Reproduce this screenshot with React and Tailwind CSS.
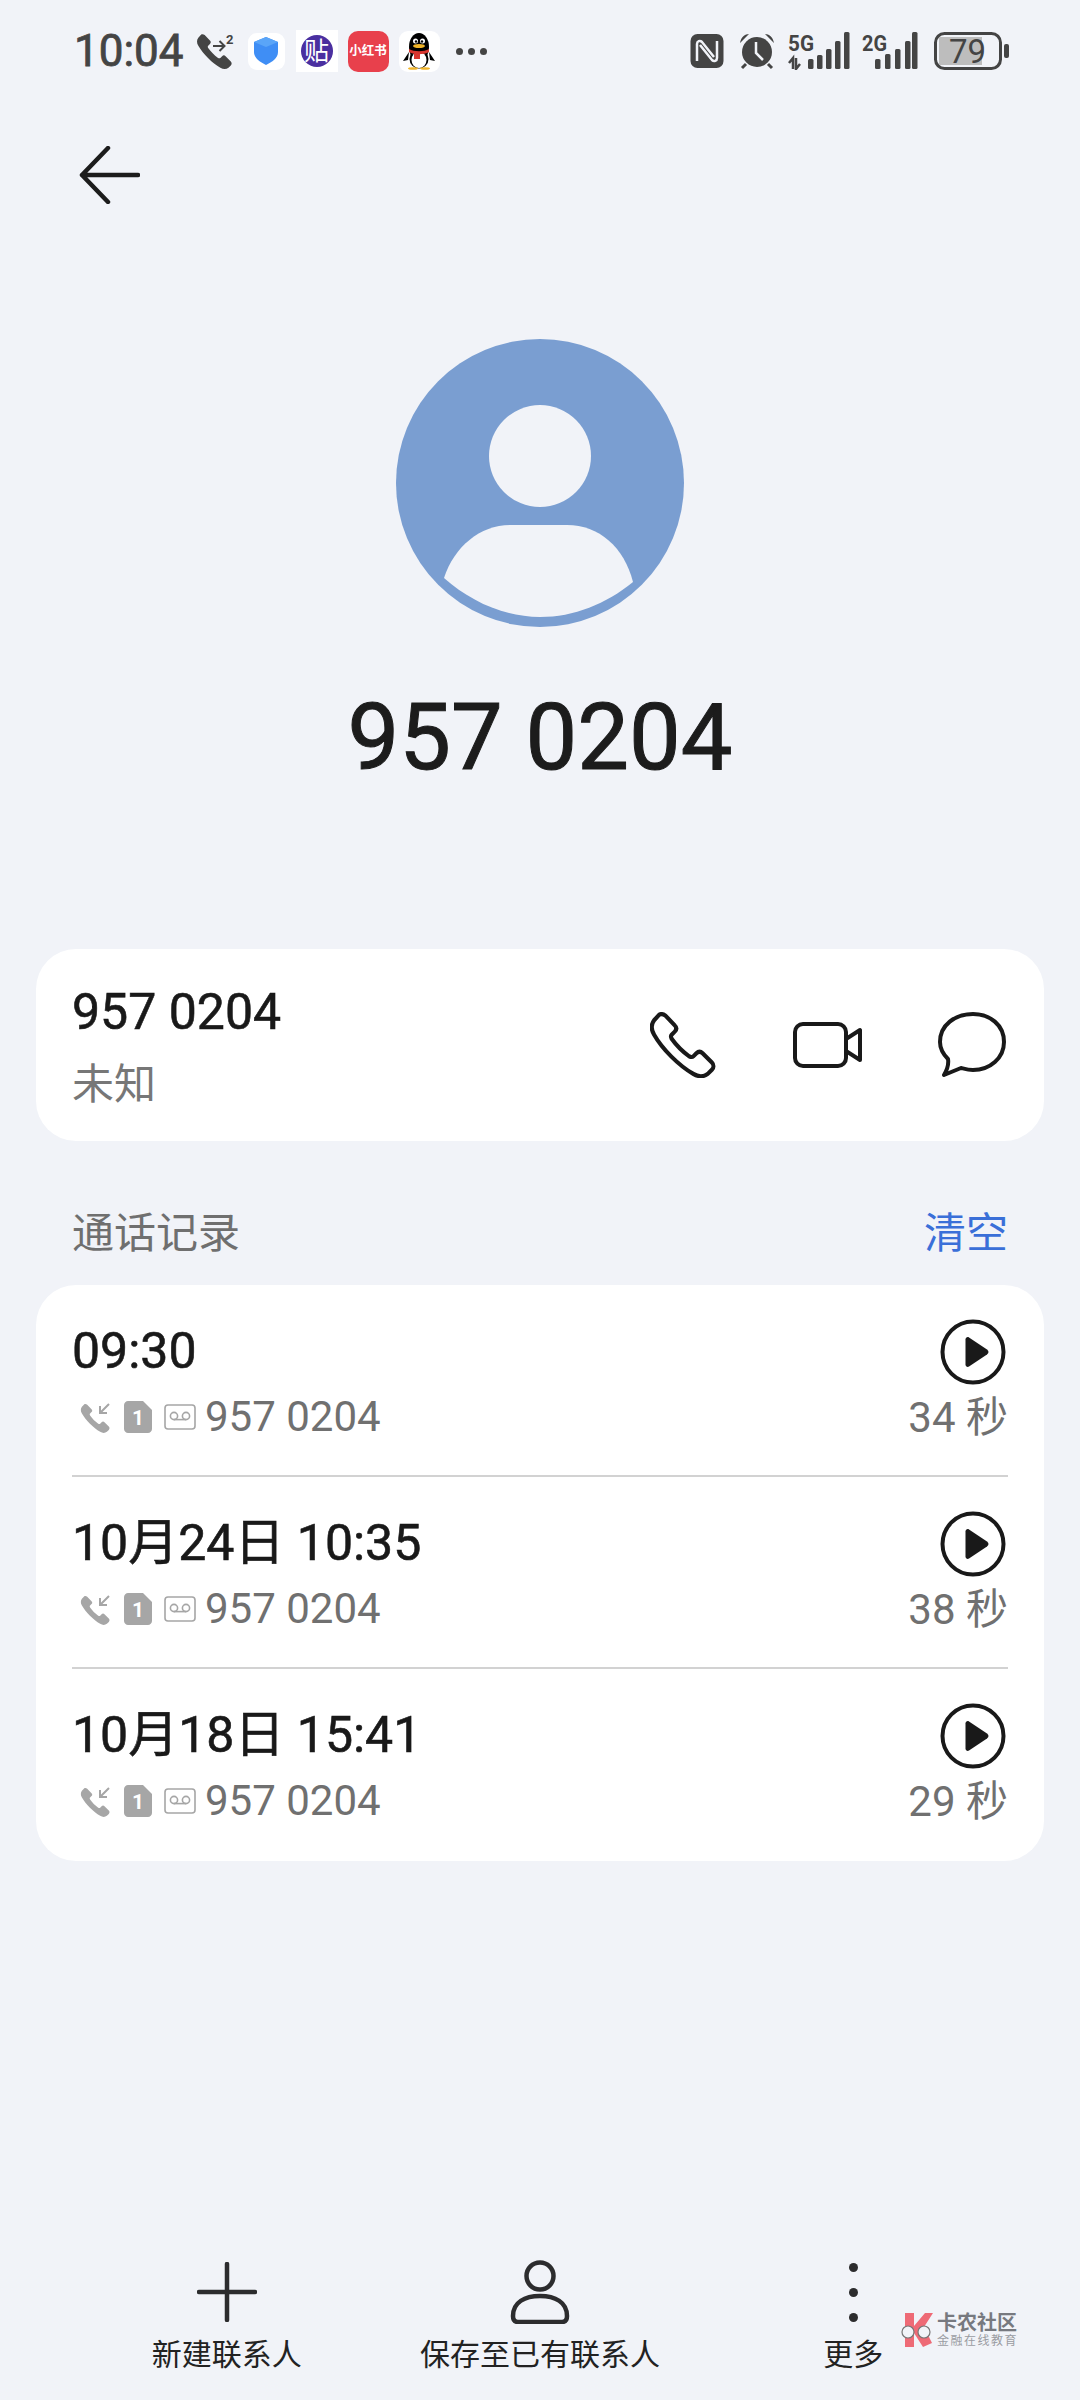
const font = { fontFamily: '"Roboto", "Noto Sans CJK SC", sans-serif' };

const records = [
  { time: '09:30', duration: '34 秒' },
  { time: '10月24日 10:35', duration: '38 秒' },
  { time: '10月18日 15:41', duration: '29 秒' },
];

const handset =
  'M9 2.5C11 1.5 13 2 15 3.5L24 13C26 15 26 17 24 19L21 22C20 23 20 24 21 26C26 33 31 38 38 43C40 44 41 44 42 43L45 40C47 38 49 38 51 40L60 49C62 51 62 54 60 56L56 60C52 63 47 63 42 60C28 52 12 36 4 22C1 17 1 12 4 8Z';

function StatusLeft() {
  return (
    <div className="flex items-center">
      <span className="text-[44px] leading-[40px] [-webkit-text-stroke:0.8px_#444444] text-[#444444]">10:04</span>
      {/* 通话转接 */}
      <svg className="ml-[12px] w-[40px] h-[38px]" viewBox="0 0 40 38">
        <g transform="translate(0 1) scale(0.58)">
          <path d={handset} fill="#444444" />
        </g>
        <path d="M17 14H28M23.5 9L28.5 14L23.5 19" fill="none" stroke="#444444" strokeWidth="2" />
        <text x="30" y="12" fontSize="13" fontWeight="700" fill="#444444">2</text>
      </svg>
      {/* 盾牌 */}
      <div className="ml-[12px] w-[37px] h-[37px] rounded-[9px] bg-white flex items-center justify-center">
        <svg className="w-[26px] h-[30px]" viewBox="0 0 26 30">
          <path d="M13 1L25 6V16C25 22 19 26 13 29C7 26 1 22 1 16V6Z" fill="#3f8ef5" />
          <path d="M13 1L25 6L13 11L1 6Z" fill="#5aa5f8" />
        </svg>
      </div>
      {/* 贴 */}
      <div className="ml-[11px] w-[42px] h-[42px] bg-white flex items-center justify-center">
        <div className="w-[32px] h-[32px] rounded-full bg-[#4a2fa0] flex items-center justify-center text-[25px] leading-none text-white">贴</div>
      </div>
      {/* 小红书 */}
      <div className="ml-[10px] w-[41px] h-[41px] rounded-[10px] bg-[#e8404c] flex items-center justify-center text-[12.5px] leading-none font-bold text-white whitespace-nowrap">小红书</div>
      {/* QQ */}
      <div className="ml-[10px] w-[41px] h-[41px] rounded-[9px] bg-white flex items-center justify-center">
        <svg className="w-[34px] h-[38px]" viewBox="0 0 34 38">
          <ellipse cx="17" cy="15" rx="10" ry="14" fill="#000" />
          <path d="M7 20L1 29L6 28ZM27 20L33 29L28 28Z" fill="#000" />
          <ellipse cx="17" cy="27" rx="9.5" ry="9.5" fill="#000" />
          <ellipse cx="17" cy="28" rx="7.5" ry="8" fill="#fff" />
          <circle cx="13.5" cy="9" r="2.5" fill="#fff" />
          <circle cx="20.5" cy="9" r="2.5" fill="#fff" />
          <circle cx="14" cy="9.5" r="1.2" fill="#000" />
          <circle cx="20" cy="9.5" r="1.2" fill="#000" />
          <ellipse cx="17" cy="14" rx="6" ry="2" fill="#f0b429" />
          <path d="M7 17C12 20 22 20 27 17V20C22 23 12 23 7 20Z" fill="#d8362f" />
          <rect x="12" y="20" width="6" height="7" fill="#d8362f" />
          <ellipse cx="11" cy="36.5" rx="5" ry="1.3" fill="#f0b429" />
          <ellipse cx="23" cy="36.5" rx="5" ry="1.3" fill="#f0b429" />
        </svg>
      </div>
      <div className="ml-[16px] flex gap-[5px]">
        <span className="w-[7px] h-[7px] rounded-full bg-[#444444]" />
        <span className="w-[7px] h-[7px] rounded-full bg-[#444444]" />
        <span className="w-[7px] h-[7px] rounded-full bg-[#444444]" />
      </div>
    </div>
  );
}

function SignalBars({ bars }) {
  return bars.map(([x, h]) => <rect key={x} x={x} y={37 - h} width="5.5" height={h} rx="1.5" fill="#444444" />);
}

function StatusRight() {
  return (
    <div className="flex items-center">
      <svg className="w-[34px] h-[36px]" viewBox="0 0 34 36">
        <rect x="0.5" y="1" width="33" height="34" rx="7" fill="#444444" />
        <path d="M7 28V11C7 8 10 7 12 9L24 24M27 8V25C27 28 24 29 22 27L10 12" fill="none" stroke="#f1f3f8" strokeWidth="2.5" />
      </svg>
      <svg className="ml-[14px] w-[38px] h-[38px]" viewBox="0 0 38 38">
        <circle cx="19" cy="20" r="15" fill="#444444" />
        <path d="M2 11C3 5 7 2 11 2ZM36 11C35 5 31 2 27 2Z" fill="#444444" />
        <path d="M8 32L4 36M30 32L34 36" stroke="#444444" strokeWidth="3" />
        <path d="M18 10V21L25 28" fill="none" stroke="#f1f3f8" strokeWidth="2.5" />
      </svg>
      <svg className="ml-[12px] w-[62px] h-[38px]" viewBox="0 0 62 38">
        <text x="0" y="19" fontSize="22" fontWeight="700" fill="#444444" textLength="26" lengthAdjust="spacingAndGlyphs">5G</text>
        <path d="M5 37V26L1 31M8 26V37L12 32" fill="none" stroke="#444444" strokeWidth="2.5" />
        <SignalBars bars={[[20, 10], [29, 14], [38, 20], [47, 28], [56, 37]]} />
      </svg>
      <svg className="ml-[12px] w-[56px] h-[38px]" viewBox="0 0 56 38">
        <text x="0" y="19" fontSize="22" fontWeight="700" fill="#444444" textLength="25" lengthAdjust="spacingAndGlyphs">2G</text>
        <SignalBars bars={[[13, 10], [23, 15], [33, 20], [43, 28], [50, 37]]} />
      </svg>
      <svg className="ml-[16px] w-[75px] h-[38px]" viewBox="0 0 75 38">
        <rect x="1.5" y="1.5" width="65" height="35" rx="9" fill="none" stroke="#444444" strokeWidth="3" />
        <path d="M5 5H48V33H5Z" fill="#bdbdbd" />
        <text x="15" y="31" fontSize="33" fill="#444444">79</text>
        <rect x="70" y="12" width="5" height="14" rx="2" fill="#444444" />
      </svg>
    </div>
  );
}

function RecordRow({ time, duration, last }) {
  return (
    <div className={last ? 'mx-[36px] h-[192px] flex justify-between' : 'mx-[36px] h-[192px] flex justify-between border-b-[2px] border-[#d2d2d2]'}>
      <div className="pt-[37px]">
        <div className="text-[50px] leading-[58px] [-webkit-text-stroke:0.6px_#191919] text-[#191919]">{time}</div>
        <div className="mt-[16px] flex items-center h-[42px]">
          <svg className="ml-[8px] w-[33px] h-[33px]" viewBox="0 0 33 33">
            <g transform="translate(0 2) scale(0.48)">
              <path d={handset} fill="#a6a6a6" />
            </g>
            <path d="M29 3L20 12M20 5V12H27" fill="none" stroke="#a6a6a6" strokeWidth="2" />
          </svg>
          <svg className="ml-[11px] w-[28px] h-[32px]" viewBox="0 0 28 32">
            <path d="M4 0H19L28 9V28C28 30 26 32 24 32H4C2 32 0 30 0 28V4C0 2 2 0 4 0Z" fill="#a6a6a6" />
            <text x="14" y="24" textAnchor="middle" fontSize="21" fontWeight="700" fill="#fff">1</text>
          </svg>
          <svg className="ml-[12px] w-[32px] h-[26px]" viewBox="0 0 32 26">
            <rect x="1" y="1" width="30" height="24" rx="3" fill="none" stroke="#a6a6a6" strokeWidth="1.6" />
            <circle cx="10" cy="12" r="3.6" fill="none" stroke="#a6a6a6" strokeWidth="1.6" />
            <circle cx="22" cy="12" r="3.6" fill="none" stroke="#a6a6a6" strokeWidth="1.6" />
            <path d="M10 15.6H22" stroke="#a6a6a6" strokeWidth="1.6" />
          </svg>
          <span className="ml-[9px] text-[42px] leading-[42px] text-[#707070]">957 0204</span>
        </div>
      </div>
      <div className="pt-[34px] flex flex-col items-end">
        <svg className="mr-[2px] w-[66px] h-[66px]" viewBox="0 0 66 66">
          <circle cx="33" cy="33" r="30.5" fill="none" stroke="#191919" strokeWidth="4" />
          <path d="M25.5 20.5C25.5 18.5 27.5 17.5 29 18.5L47 30.5C49 32 49 34 47 35.5L29 47.5C27.5 48.5 25.5 47.5 25.5 45.5Z" fill="#191919" />
        </svg>
        <div className="mt-[12px] text-[42px] leading-[42px] text-[#707070]">{duration}</div>
      </div>
    </div>
  );
}

function NavItem({ label, children }) {
  return (
    <div className="flex flex-col items-center">
      <div className="h-[64px] flex items-center justify-center">{children}</div>
      <div className="mt-[11px] text-[30px] leading-[40px] text-[#222222] whitespace-nowrap">{label}</div>
    </div>
  );
}

export default function App() {
  return (
    <div className="relative h-[2400px] w-[1080px] flex flex-col bg-[#f1f3f8] overflow-hidden" style={font}>
      {/* 状态栏 */}
      <div className="pt-[30px] pl-[74px] pr-[71px] flex items-center justify-between h-[72px]">
        <StatusLeft />
        <StatusRight />
      </div>

      {/* 返回 */}
      <div className="mt-[74px] pl-[78px] h-[58px]">
        <svg className="w-[62px] h-[58px]" viewBox="0 0 62 58" fill="none" stroke="#1c1c1c" strokeWidth="4.5" strokeLinecap="round" strokeLinejoin="round">
          <path d="M30 2L4 29L30 56M4 29H60" />
        </svg>
      </div>

      {/* 头像 */}
      <div className="mt-[135px] flex justify-center">
        <svg className="w-[288px] h-[288px]" viewBox="0 0 288 288">
          <circle cx="144" cy="144" r="144" fill="#7a9ed1" />
          <circle cx="144" cy="117" r="51" fill="#f1f3f8" />
          <path d="M48 239C58 208 84 186 114 186H171C203 186 228 208 237 243C210 265 178 278 144 278C108 278 74 262 48 239Z" fill="#f1f3f8" />
        </svg>
      </div>

      <div className="mt-[56px] text-center text-[92px] leading-[110px] [-webkit-text-stroke:1px_#1c1c1c] text-[#1c1c1c]">957 0204</div>

      {/* 号码卡片 */}
      <div className="mt-[156px] mx-[36px] h-[192px] rounded-[40px] bg-white pl-[36px] flex justify-between">
        <div className="pt-[33px]">
          <div className="text-[50px] leading-[60px] [-webkit-text-stroke:0.6px_#191919] text-[#191919]">957 0204</div>
          <div className="mt-[17px] text-[42px] leading-[52px] text-[#777777]">未知</div>
        </div>
        <div className="flex items-center pr-[38px] pb-[1px]">
          <svg className="w-[66px] h-[66px]" viewBox="0 0 64 64">
            <path d={handset} fill="none" stroke="#191919" strokeWidth="4" strokeLinejoin="round" />
          </svg>
          <svg className="ml-[77px] w-[70px] h-[46px]" viewBox="0 0 70 46" fill="none" stroke="#191919" strokeWidth="4" strokeLinejoin="round">
            <rect x="2" y="2" width="51" height="42" rx="8" />
            <path d="M53 17L67 8V38L53 29Z" />
          </svg>
          <svg className="ml-[75px] w-[68px] h-[66px]" viewBox="0 0 68 66" fill="none" stroke="#191919" strokeWidth="4" strokeLinejoin="round">
            <path d="M35 2C52 2 66 13 66 30C66 46 52 58 35 58C30 58 27 57 23 56L6 63C9 58 11 53 10 47C5 42 2 36 2 30C2 13 17 2 35 2Z" />
          </svg>
        </div>
      </div>

      {/* 通话记录 */}
      <div className="mt-[65px] mx-[72px] flex items-center justify-between h-[56px]">
        <span className="text-[42px] leading-[56px] text-[#6f6f6f]">通话记录</span>
        <span className="text-[42px] leading-[56px] text-[#3a6fd8]">清空</span>
      </div>

      <div className="mt-[23px] mx-[36px] rounded-[40px] bg-white">
        {records.map((r, i) => (
          <RecordRow key={r.time} time={r.time} duration={r.duration} last={i === records.length - 1} />
        ))}
      </div>

      {/* 底部操作 */}
      <div className="mt-auto pb-[25px] px-[70px] grid grid-cols-3">
        <NavItem label="新建联系人">
          <svg className="w-[60px] h-[60px]" viewBox="0 0 60 60" stroke="#2c2c2e" strokeWidth="4.5" strokeLinecap="round">
            <path d="M30 2V58M2 30H58" />
          </svg>
        </NavItem>
        <NavItem label="保存至已有联系人">
          <svg className="w-[60px] h-[64px]" viewBox="0 0 60 64" fill="none" stroke="#2c2c2e" strokeWidth="4.5">
            <circle cx="30" cy="16" r="13.5" />
            <path d="M3 56C3 42 15 36 30 36C45 36 57 42 57 56C57 60 55 62 52 62H8C5 62 3 60 3 56Z" />
          </svg>
        </NavItem>
        <NavItem label="更多">
          <div className="flex flex-col gap-[16px]">
            <span className="w-[9px] h-[9px] rounded-full bg-[#2c2c2e]" />
            <span className="w-[9px] h-[9px] rounded-full bg-[#2c2c2e]" />
            <span className="w-[9px] h-[9px] rounded-full bg-[#2c2c2e]" />
          </div>
        </NavItem>
      </div>

      {/* 水印 */}
      <div className="absolute left-[900px] top-[2312px] flex items-center">
        <svg className="w-[36px] h-[36px]" viewBox="0 0 36 36">
          <path d="M5 1H14V14L25 1H33L24 15L32 31L23 35L14 21V35H5Z" fill="#ee6a76" />
          <circle cx="8" cy="20" r="6" fill="#f1f3f8" stroke="#777" strokeWidth="1.2" />
          <circle cx="24" cy="20" r="6" fill="#f1f3f8" stroke="#777" strokeWidth="1.2" />
        </svg>
        <div className="ml-[1px] flex flex-col">
          <span className="text-[20px] leading-[22px] font-bold text-[#77797f] whitespace-nowrap">卡农社区</span>
          <span className="text-[12px] leading-[14px] tracking-[1.5px] text-[#9a9ca2] whitespace-nowrap">金融在线教育</span>
        </div>
      </div>
    </div>
  );
}
